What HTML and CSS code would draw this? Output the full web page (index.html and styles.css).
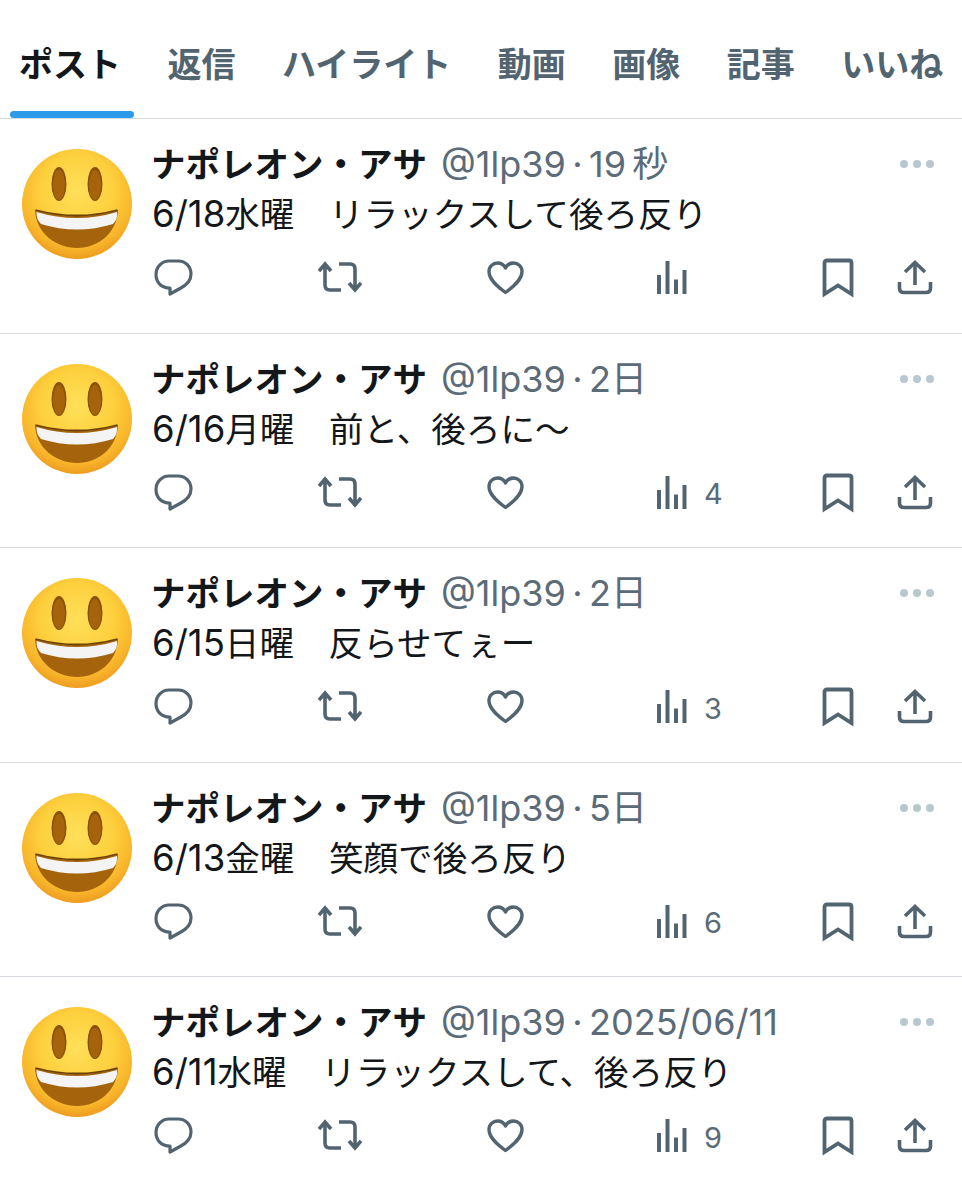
FILE: index.html
```html
<!DOCTYPE html>
<html lang="ja">
<head>
<meta charset="utf-8">
<title>ポスト</title>
<link rel="stylesheet" href="styles.css">
</head>
<body>
<svg class="defs" width="0" height="0" aria-hidden="true">
  <defs>
    <radialGradient id="face" cx="50%" cy="38%" r="62%">
      <stop offset="0" stop-color="#ffe05a"/>
      <stop offset="0.55" stop-color="#fdcf3c"/>
      <stop offset="0.85" stop-color="#f8b42a"/>
      <stop offset="1" stop-color="#ee9c20"/>
    </radialGradient>
    <symbol id="emoji" viewBox="0 0 110 110">
      <circle cx="55" cy="55" r="55" fill="url(#face)"/>
      <ellipse cx="37" cy="35" rx="7.500" ry="17" fill="#8a5208"/>
      <ellipse cx="37" cy="36" rx="6" ry="15" fill="#a5640c"/>
      <ellipse cx="73" cy="35" rx="7.500" ry="17" fill="#8a5208"/>
      <ellipse cx="73" cy="36" rx="6" ry="15" fill="#a5640c"/>
      <path d="M13 61Q55 73 96 61C95 84 76 99 55 99C34 99 14 84 13 61Z" fill="#a5640c"/>
      <path d="M13.500 61Q55 72 95.500 61" fill="none" stroke="#6e4309" stroke-width="1.800"/>
      <path d="M14.500 63Q55 75 95 63Q96 70 91 75Q55 86 19 75Q14 70 14.500 63Z" fill="#f4f4f4"/>
    </symbol>
    <symbol id="i-reply" viewBox="0 0 44 44">
      <path d="M17 4H26C34 4 39 10 39 17C39 24 33 29 28 31.500L18 37V31C9 31 4 25 4 17.500C4 10 10 4 17 4Z" fill="none" stroke="#536471" stroke-width="3.200" stroke-linejoin="round"/>
    </symbol>
    <symbol id="i-retweet" viewBox="0 0 44 44">
      <path d="M7 9V28Q7 33 12 33H23M21 7H32Q37 7 37 12V32M1 14L7 7L13 14M31 26L37 33L43 26" fill="none" stroke="#536471" stroke-width="3.600"/>
    </symbol>
    <symbol id="i-like" viewBox="0 0 44 44">
      <path d="M20.500 35.500C13 30 4 23 4 14.500C4 9.500 8 6 12.500 6C16 6 19 8 20.500 11C22 8 25 6 28.500 6C33 6 37 9.500 37 14.500C37 23 28 30 20.500 35.500Z" fill="none" stroke="#536471" stroke-width="3.400" stroke-linejoin="round"/>
    </symbol>
    <symbol id="i-views" viewBox="0 0 44 44">
      <path d="M7 18H11V37H7ZM15.500 4H19.500V37H15.500ZM24 22.500H28V37H24ZM32.500 13H36.500V37H32.500Z" fill="#536471"/>
    </symbol>
    <symbol id="i-bookmark" viewBox="0 0 44 44">
      <path d="M8.500 37V6Q8.500 3.500 11 3.500H33Q35.500 3.500 35.500 6V37L22 28.500Z" fill="none" stroke="#536471" stroke-width="3.800" stroke-linejoin="miter"/>
    </symbol>
    <symbol id="i-share" viewBox="0 0 44 44">
      <path d="M22 28V6M12 15L22 5.500L32 15M6.500 25V31Q6.500 35.500 11 35.500H33Q37.500 35.500 37.500 31V25" fill="none" stroke="#536471" stroke-width="3.600"/>
    </symbol>
  </defs>
</svg>

<main class="timeline">
  <nav class="tabs">
    <a class="tab tab-active">ポスト</a>
    <a class="tab">返信</a>
    <a class="tab">ハイライト</a>
    <a class="tab">動画</a>
    <a class="tab">画像</a>
    <a class="tab">記事</a>
    <a class="tab">いいね</a>
  </nav>

  <article class="tweet">
    <svg class="avatar"><use href="#emoji"/></svg>
    <div class="body">
      <div class="head"><b class="name">ナポレオン・アサ</b><span class="meta">@1lp39<span class="sep">·</span>19 秒</span></div>
      <p class="text"><span class="date">6/18</span>水曜　リラックスして後ろ反り</p>
      <div class="actions">
        <svg class="icon"><use href="#i-reply"/></svg>
        <svg class="icon"><use href="#i-retweet"/></svg>
        <svg class="icon"><use href="#i-like"/></svg>
        <div class="views"><svg class="icon"><use href="#i-views"/></svg></div>
        <svg class="icon"><use href="#i-bookmark"/></svg>
        <svg class="icon"><use href="#i-share"/></svg>
      </div>
    </div>
    <div class="more"><i></i><i></i><i></i></div>
  </article>

  <article class="tweet">
    <svg class="avatar"><use href="#emoji"/></svg>
    <div class="body">
      <div class="head"><b class="name">ナポレオン・アサ</b><span class="meta">@1lp39<span class="sep">·</span>2日</span></div>
      <p class="text"><span class="date">6/16</span>月曜　前と、後ろに～</p>
      <div class="actions">
        <svg class="icon"><use href="#i-reply"/></svg>
        <svg class="icon"><use href="#i-retweet"/></svg>
        <svg class="icon"><use href="#i-like"/></svg>
        <div class="views"><svg class="icon"><use href="#i-views"/></svg><span class="count">4</span></div>
        <svg class="icon"><use href="#i-bookmark"/></svg>
        <svg class="icon"><use href="#i-share"/></svg>
      </div>
    </div>
    <div class="more"><i></i><i></i><i></i></div>
  </article>

  <article class="tweet">
    <svg class="avatar"><use href="#emoji"/></svg>
    <div class="body">
      <div class="head"><b class="name">ナポレオン・アサ</b><span class="meta">@1lp39<span class="sep">·</span>2日</span></div>
      <p class="text"><span class="date">6/15</span>日曜　反らせてぇー</p>
      <div class="actions">
        <svg class="icon"><use href="#i-reply"/></svg>
        <svg class="icon"><use href="#i-retweet"/></svg>
        <svg class="icon"><use href="#i-like"/></svg>
        <div class="views"><svg class="icon"><use href="#i-views"/></svg><span class="count">3</span></div>
        <svg class="icon"><use href="#i-bookmark"/></svg>
        <svg class="icon"><use href="#i-share"/></svg>
      </div>
    </div>
    <div class="more"><i></i><i></i><i></i></div>
  </article>

  <article class="tweet">
    <svg class="avatar"><use href="#emoji"/></svg>
    <div class="body">
      <div class="head"><b class="name">ナポレオン・アサ</b><span class="meta">@1lp39<span class="sep">·</span>5日</span></div>
      <p class="text"><span class="date">6/13</span>金曜　笑顔で後ろ反り</p>
      <div class="actions">
        <svg class="icon"><use href="#i-reply"/></svg>
        <svg class="icon"><use href="#i-retweet"/></svg>
        <svg class="icon"><use href="#i-like"/></svg>
        <div class="views"><svg class="icon"><use href="#i-views"/></svg><span class="count">6</span></div>
        <svg class="icon"><use href="#i-bookmark"/></svg>
        <svg class="icon"><use href="#i-share"/></svg>
      </div>
    </div>
    <div class="more"><i></i><i></i><i></i></div>
  </article>

  <article class="tweet">
    <svg class="avatar"><use href="#emoji"/></svg>
    <div class="body">
      <div class="head"><b class="name">ナポレオン・アサ</b><span class="meta">@1lp39<span class="sep">·</span>2025/06/11</span></div>
      <p class="text"><span class="date">6/11</span>水曜　リラックスして、後ろ反り</p>
      <div class="actions">
        <svg class="icon"><use href="#i-reply"/></svg>
        <svg class="icon"><use href="#i-retweet"/></svg>
        <svg class="icon"><use href="#i-like"/></svg>
        <div class="views"><svg class="icon"><use href="#i-views"/></svg><span class="count">9</span></div>
        <svg class="icon"><use href="#i-bookmark"/></svg>
        <svg class="icon"><use href="#i-share"/></svg>
      </div>
    </div>
    <div class="more"><i></i><i></i><i></i></div>
  </article>
</main>
</body>
</html>
```
FILE: styles.css
```css
html, body {
  margin: 0;
  padding: 0;
  background: #fff;
}

body {
  font-family: Inter, "Noto Sans CJK JP", sans-serif;
  color: #14171a;
  overflow: hidden;
}

.defs {
  display: block;
  height: 0;
}

.timeline {
  width: 962px;
  height: 1200px;
  overflow: hidden;
}

.tabs {
  display: flex;
  gap: 46.500px;
  height: 119px;
  padding-left: 19px;
  box-sizing: border-box;
  border-bottom: 1px solid #d5dade;
  white-space: nowrap;
}

.tab {
  position: relative;
  padding-top: 44px;
  font-size: 34px;
  line-height: 42px;
  font-weight: 700;
  color: #536471;
}

.tab-active {
  color: #14171a;
}

.tab-active::after {
  content: "";
  position: absolute;
  left: -9px;
  right: -13px;
  top: 111px;
  height: 7px;
  border-radius: 4px;
  background: #2b9bea;
}

.tweet {
  display: flex;
  height: 214.500px;
  box-sizing: border-box;
  padding: 30px 28px 0 22px;
  border-bottom: 1px solid #d5dade;
}

.tweet:last-child {
  border-bottom: 0;
}

.avatar {
  flex: none;
  width: 110px;
  height: 110px;
}

.body {
  flex: 1;
  min-width: 0;
  margin-left: 20px;
}

.head {
  display: flex;
  align-items: baseline;
  gap: 14px;
  height: 30px;
  line-height: 30px;
  white-space: nowrap;
}

.name {
  font-size: 34.500px;
  font-weight: 700;
  margin-left: -1px;
}

.meta {
  font-size: 36px;
  word-spacing: -4px;
  color: #5b6b78;
}

.sep {
  margin: 0 6.500px;
}

.text {
  margin: 16px 0 0;
  font-size: 34.600px;
  line-height: 38px;
  white-space: nowrap;
}

.date {
  font-size: 36.500px;
}

.actions {
  display: grid;
  grid-template-columns: 166px 167px 165px 166px 77px 44px;
  align-items: center;
  margin: 24px 0 0;
}

.icon {
  display: block;
  width: 44px;
  height: 44px;
}

.views {
  display: flex;
  align-items: center;
  gap: 10px;
}

.count {
  font-size: 29px;
  color: #5b6b78;
}

.more {
  flex: none;
  display: flex;
  gap: 5px;
  height: 9px;
  margin-top: 11px;
}

.more i {
  width: 8px;
  height: 8px;
  border-radius: 50%;
  background: #b9c8ce;
}
```
